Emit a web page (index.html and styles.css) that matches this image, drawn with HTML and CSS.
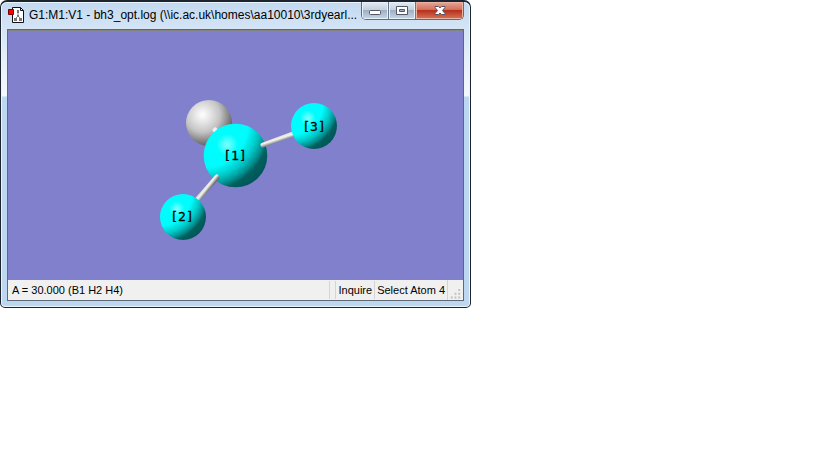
FILE: index.html
```
<!DOCTYPE html>
<html lang="en">
<head>
<meta charset="utf-8">
<title>bh3_opt.log</title>
<link rel="stylesheet" href="styles.css">
</head>
<body>
<main class="window">
  <header class="titlebar">
    <svg class="app-icon" width="18" height="16" viewBox="0 0 18 16" aria-hidden="true">
      <path d="M4.500 .5H12.500L15.500 3.500V15.500H4.500Z" fill="#fff" stroke="#111"/>
      <path d="M12.500 .5V3.500H15.500" fill="none" stroke="#111"/>
      <path d="M10 5V9L7 12M10 9L13 12" fill="none" stroke="#888"/>
      <path d="M9 3h2v3H9zM9 8h2v2H9zM6 11h3v3H6zM11 11h3v3h-3z" fill="#777"/>
      <path d="M.5 2.500H5.500V7.500H.5Z" fill="#f00" stroke="#700"/>
    </svg>
    <h1 class="title">G1:M1:V1 - bh3_opt.log (\\ic.ac.uk\homes\aa10010\3rdyearl...</h1>
    <div class="controls">
      <button class="control" type="button" aria-label="Minimize">
        <svg width="14" height="12" viewBox="0 0 14 12"><rect x="1.500" y="5.500" width="11" height="4" rx="1" fill="#fff" stroke="#535666"/></svg>
      </button>
      <button class="control" type="button" aria-label="Maximize">
        <svg width="14" height="12" viewBox="0 0 14 12"><path d="M1.500 1.500h11v8h-11zM4.500 4.500v2h5v-2z" fill="#fff" fill-rule="evenodd" stroke="#535666" stroke-linejoin="round"/></svg>
      </button>
      <button class="control close" type="button" aria-label="Close">
        <svg width="14" height="12" viewBox="0 0 14 12"><path d="M2 1.500h3.500l1.500 1.500 1.500-1.500h3.500v1L9.500 5.500l2.500 3v1H8.500L7 8l-1.500 1.500H2v-1l2.500-3L2 2.500z" fill="#fff" stroke="#535666" stroke-linejoin="round"/></svg>
      </button>
    </div>
  </header>
  <section class="client">
    <svg class="scene" viewBox="8 31 455 249" role="img" aria-label="BH3 molecule">
      <defs>
        <radialGradient id="cyan" cx="0" cy="0" r="1.200">
          <stop offset="0" stop-color="#00ffff"/>
          <stop offset=".58" stop-color="#00fcfc"/>
          <stop offset=".72" stop-color="#00c8c8"/>
          <stop offset=".82" stop-color="#009090"/>
          <stop offset=".88" stop-color="#006060"/>
          <stop offset="1" stop-color="#005656"/>
        </radialGradient>
        <radialGradient id="shine" cx=".37" cy=".33" r=".17">
          <stop offset="0" stop-color="#80ffff"/>
          <stop offset="1" stop-color="#80ffff" stop-opacity="0"/>
        </radialGradient>
        <radialGradient id="white" cx=".36" cy=".32" r=".76">
          <stop offset="0" stop-color="#fff"/>
          <stop offset=".2" stop-color="#e8e8e8"/>
          <stop offset=".5" stop-color="#c4c4c4"/>
          <stop offset=".75" stop-color="#858585"/>
          <stop offset="1" stop-color="#484848"/>
        </radialGradient>
        <linearGradient id="bondRight" gradientUnits="userSpaceOnUse" x1="279" y1="136" x2="281" y2="142">
          <stop offset="0" stop-color="#ddd"/><stop offset=".4" stop-color="#f2f2ee"/><stop offset="1" stop-color="#666"/>
        </linearGradient>
        <linearGradient id="bondLeft" gradientUnits="userSpaceOnUse" x1="204" y1="187" x2="209" y2="191">
          <stop offset="0" stop-color="#ccc"/><stop offset=".4" stop-color="#f4f4f0"/><stop offset="1" stop-color="#555"/>
        </linearGradient>
      </defs>
      <circle cx="209" cy="123" r="23" fill="url(#white)"/>
      <path d="M215 130L222 139" stroke="#eee" stroke-width="5" stroke-linecap="round"/>
      <circle cx="235.500" cy="155.500" r="31.800" fill="url(#cyan)"/>
      <circle cx="235.500" cy="155.500" r="31.800" fill="url(#shine)"/>
      <path d="M263 145L298 132" stroke="url(#bondRight)" stroke-width="5" stroke-linecap="round"/>
      <path d="M217 177L196 201" stroke="url(#bondLeft)" stroke-width="5" stroke-linecap="round"/>
      <circle cx="314" cy="126" r="23" fill="url(#cyan)"/>
      <circle cx="314" cy="126" r="23" fill="url(#shine)"/>
      <circle cx="183" cy="217" r="23" fill="url(#cyan)"/>
      <circle cx="183" cy="217" r="23" fill="url(#shine)"/>
      <g class="atom-label">
        <text x="235" y="160">[1]</text>
        <text x="314" y="131">[3]</text>
        <text x="182" y="221">[2]</text>
      </g>
    </svg>
    <footer class="status">
      <span class="message">A = 30.000 (B1 H2 H4)</span>
      <span class="pane spacer"></span>
      <span class="pane">Inquire</span>
      <span class="pane">Select Atom 4</span>
      <svg class="grip" width="16" height="20" viewBox="0 0 16 20" aria-hidden="true"><path d="M11 9h2v2h-2zM7 13h2v2H7zM11 13h2v2h-2zM3 17h2v2H3zM7 17h2v2H7zM11 17h2v2h-2z" fill="#c0c0c0"/></svg>
    </footer>
  </section>
</main>
</body>
</html>
```
FILE: styles.css
```
* {
  box-sizing: border-box;
}

body {
  margin: 0;
  background: #fff;
}

.window {
  width: 100%;
  max-width: 471px;
  padding: 0 6px 6px;
  border: 1px solid #1c2430;
  border-top-width: 2px;
  border-radius: 7px 7px 5px 5px;
  background: linear-gradient(#c3d9f0 0, #d5e5f6 28px, #e6f0fa 60px, #f5f8fc 94px, #bcd7f1 95px, #bdd7f0 100%);
  box-shadow: inset 0 0 0 1px #eaf5ff;
}

.titlebar {
  display: flex;
  align-items: flex-start;
  height: 27px;
}

.app-icon {
  flex: none;
  margin: 5px 3px 0 1px;
}

.title {
  flex: 1;
  min-width: 0;
  margin: 4px 0 0;
  font: 12px/18px "Liberation Sans", Arial, sans-serif;
  color: #000;
  white-space: nowrap;
}

.controls {
  display: flex;
  flex: none;
  overflow: hidden;
  border: 1px solid #5d6b7c;
  border-top: 0;
  border-radius: 0 0 5px 5px;
}

.control {
  display: flex;
  align-items: center;
  justify-content: center;
  width: 27px;
  height: 17px;
  padding: 0;
  border: 0;
  border-right: 1px solid #66778b;
  background: linear-gradient(#e4ebf3, #c5d0de 45%, #a0b0c4 50%, #c6d7e9);
  box-shadow: inset 0 0 0 1px #e8f0f8;
}

.close {
  width: 47px;
  border-right: 0;
  background: linear-gradient(#e6a898, #d1705c 45%, #b9301b 50%, #d57558);
  box-shadow: inset 0 0 0 1px #e9b3a4;
}

.client {
  border: 1px solid #5f6975;
  background: #f0f0f0;
}

.scene {
  display: block;
  width: 100%;
  height: auto;
  border-top: 1px solid #848484;
  background: #8080cc;
}

.atom-label {
  font: 13px "DejaVu Sans Mono", monospace;
  text-anchor: middle;
  fill: #000;
  stroke: #000;
  stroke-width: .3px;
}

.status {
  display: flex;
  align-items: center;
  height: 20px;
  font: 11px/20px "Liberation Sans", Arial, sans-serif;
  color: #000;
}

.message {
  flex: 1;
  padding-left: 4px;
  white-space: nowrap;
}

.pane {
  height: 18px;
  padding: 0 2px;
  border-left: 1px solid #d4d4d4;
  line-height: 18px;
  white-space: nowrap;
}

.spacer {
  width: 6px;
}

.grip {
  flex: none;
  border-left: 1px solid #d4d4d4;
}
```
